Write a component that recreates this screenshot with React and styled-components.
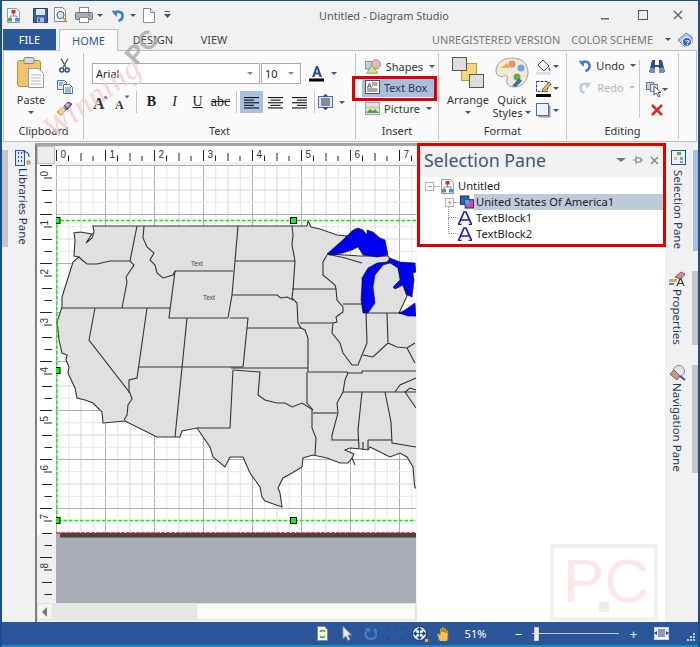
import React from "react";
import styled, { createGlobalStyle } from "styled-components";

const Global = createGlobalStyle`
  html, body { margin: 0; padding: 0; background: #f1f1f1; }
  * { box-sizing: border-box; }
`;
const UI = `"Noto Sans", "Open Sans", sans-serif`;
const BLUE = "#2b579a";

const Win = styled.div`
  position: relative; width: 700px; height: 647px; overflow: hidden;
  border: solid #1f4e8c; border-width: 1px 2px 0 2px; background: #f1f1f1;
  display: flex; flex-direction: column; font-family: ${UI}; font-size: 11px; color: #222;
`;
const TitleBar = styled.div`height: 28px; display: flex; align-items: center; padding-left: 4px; flex: none;`;
const Qat = styled.div`display: flex; align-items: center; width: 313px;`;
const QatSlot = styled.div`width: ${p => p.$w}px; margin-left: ${p => p.$ml || 0}px; display: flex; justify-content: center; align-items: center; flex: none;`;
const Title = styled.div`width: 130px; text-align: center; font-size: 10.9px; color: #555; white-space: nowrap;`;
const WinBtns = styled.div`margin-left: auto; display: flex; padding-right: 1px;`;
const WinBtn = styled.div`width: ${p => p.$w}px; height: 20px; display: flex; align-items: center; justify-content: center;`;

const TabRow = styled.div`height: 21px; display: flex; align-items: stretch; flex: none; padding-left: 1px; position: relative; z-index: 1;`;
const FileTab = styled.div`width: 53px; background: ${BLUE}; color: #fff; display: flex; align-items: center; justify-content: center; font-size: 11px; margin-right: 3px;`;
const Tab = styled.div`
  width: ${p => p.$w}px; display: flex; align-items: center; justify-content: center; font-size: 11px;
  color: ${p => (p.$active ? BLUE : "#444")};
  ${p => p.$active && `background:#fafafa; border:1px solid #bdbdbd; border-bottom:none; height:22px;`}
`;
const TabRight = styled.div`margin-left: auto; display: flex; align-items: center; color: #777; font-size: 10.9px; padding-right: 5px; white-space: nowrap;`;
const TabRightText = styled.span`margin-right: ${p => p.$mr}px;`;

const Ribbon = styled.div`
  height: 92px; flex: none; margin: 0 1px; background: #fafafa; border: 1px solid #bdbdbd; display: flex; padding: 2px 0;
`;
const Group = styled.div`width: ${p => p.$w}px; flex: none; border-right: 1px solid #c4c4c4; display: flex; flex-direction: column;`;
const GroupBody = styled.div`flex: 1; display: flex; min-height: 0; padding-left: ${p => p.$pl || 0}px;`;
const GroupLabel = styled.div`height: 20px; text-align: center; font-size: 11px; color: #333; line-height: 24px;`;

const BigBtn = styled.div`
  width: ${p => p.$w}px; display: flex; flex-direction: column; align-items: center; padding-top: ${p => p.$pt || 3}px;
  font-size: 11px; line-height: 13px; color: #333; flex: none;
`;
const BigIcon = styled.div`height: 34px; margin-bottom: ${p => p.$mb ?? 3}px; display: flex; align-items: center;`;
const BtnLine = styled.div`height: 13px; display: flex; align-items: center; gap: 3px; white-space: nowrap;`;
const Caret = styled.span`
  display: inline-block; width: 0; height: 0; border: solid transparent;
  border-width: ${p => (p.$big ? "4px 5px 0 5px" : "3px 3px 0 3px")};
  border-top-color: ${p => p.$c || "#44546a"}; margin-left: ${p => p.$ml || 0}px; vertical-align: middle; flex: none;
`;
const ToolCol = styled.div`display: flex; flex-direction: column; align-items: center; width: ${p => p.$w}px; gap: ${p => p.$gap || 0}px; padding-top: ${p => p.$pt || 0}px; flex: none;`;

const TextRows = styled.div`display: flex; flex-direction: column; padding-top: 10px;`;
const Row = styled.div`display: flex; align-items: center; height: ${p => p.$h || 22}px; margin-bottom: ${p => p.$mb || 0}px;`;
const Combo = styled.div`
  width: ${p => p.$w}px; height: 21px; border: 1px solid #ababab; background: #fff; margin-right: 1px;
  display: flex; align-items: center; justify-content: space-between; padding: 0 6px 0 3px; font-size: 11px; color: #222; flex: none;
`;
const Tool = styled.div`
  width: ${p => p.$w || 23}px; height: 22px; display: flex; align-items: center; justify-content: center; flex: none;
  background: ${p => (p.$on ? "#a9bfe0" : "transparent")}; margin-right: ${p => p.$mr || 0}px; margin-left: ${p => p.$ml || 0}px;
  font-family: "Liberation Serif", serif; font-size: 14px; color: #222;
`;
const Sep = styled.div`width: 1px; height: 22px; background: #c4c4c4; margin: 0 ${p => p.$r ?? p.$m ?? 1}px 0 ${p => p.$m ?? 1}px; flex: none;`;

const InsertCol = styled.div`display: flex; flex-direction: column; padding: 3px 0 0 6px; width: 100%;`;
const InsertBtn = styled.div`
  width: 73px; height: 21px; display: flex; align-items: center; padding-left: 3px; gap: 4px; font-size: 11px; color: #333; white-space: nowrap;
  background: ${p => (p.$on ? "#a9bfe0" : "transparent")}; margin-bottom: 1px;
`;
const UndoRow = styled.div`display: flex; align-items: center; gap: 5px; height: 22px; color: ${p => (p.$off ? "#b5b5b5" : "#333")}; font-size: 11px;`;
const VSep = styled.div`width: 1px; height: 58px; margin: 7px 0 0 0; background: #c8c8c8;`;
const RedBox = styled.div`position: absolute; border: 3px solid #e00000; pointer-events: none; z-index: 3;
  left: ${p => p.$l}px; top: ${p => p.$t}px; width: ${p => p.$w}px; height: ${p => p.$h}px;`;

const Main = styled.div`height: 479px; flex: none; margin-top: 1px; display: flex;`;
const Rail = styled.div`width: 33px; flex: none; display: flex; flex-direction: column; padding-top: 7px; position: relative;`;
const RailTab = styled.div`
  height: ${p => p.$h}px; margin-bottom: ${p => p.$mb || 0}px; display: flex; flex-direction: ${p => (p.$right ? "row" : "row-reverse")};
  justify-content: flex-end; gap: 5px;
`;
const RailMark = styled.div`width: ${p => p.$w || 6}px; background: ${p => p.$c || "#c6c6c6"}; flex: none;`;
const RailBody = styled.div`display: flex; flex-direction: column; align-items: center; width: 20px; flex: none;`;
const RailText = styled.div`writing-mode: vertical-rl; font-size: 11.5px; color: #2a3a55; white-space: nowrap; line-height: 16px; margin-top: ${p => p.$mt || 2}px;`;

const CanvasFrame = styled.div`width: 382px; flex: none; border-top: 3px solid #a6a6a6; border-left: 2px solid #7f7f7f; display: flex; flex-direction: column; background: #f1f1f1;`;
const RulerRow = styled.div`height: 19px; display: flex; flex: none;`;
const Corner = styled.div`width: 18px; height: 18px; background: #ececec; border: 1px solid #c2c2c2; margin-right: 1px; flex: none;`;
const MidRow = styled.div`height: 438px; display: flex; flex: none;`;
const ScrollRow = styled.div`height: 17px; flex: none; display: flex; background: #e6e6e6; padding-right: 1px;`;
const ScrollBtn = styled.div`width: 16px; background: #f4f4f4; border: 1px solid #e0e0e0; display: flex; align-items: center; justify-content: center; flex: none;`;
const ScrollThumb = styled.div`margin-left: auto; width: 220px; background: #fbfbfb; border: 1px solid #e2e2e2;`;

const Pane = styled.div`width: 248px; flex: none; background: #fff; display: flex; flex-direction: column;`;
const PaneHead = styled.div`height: 34px; flex: none; background: #f1f1f1; display: flex; align-items: center; padding: 0 6px 0 7px;`;
const PaneTitle = styled.h2`margin: 0; font-weight: 400; font-size: 17.8px; color: #3f5679; white-space: nowrap; flex: 1;`;
const PaneBtns = styled.div`display: flex; align-items: center; gap: 7px;`;
const Tree = styled.div`display: flex; flex-direction: column; padding-top: 1px;`;
const TreeRow = styled.div`height: 16px; display: flex; align-items: center; padding-left: ${p => p.$pl}px; color: #222; font-size: 11.2px; white-space: nowrap;`;
const Expander = styled.span`
  width: 9px; height: 9px; border: 1px solid #b0b0b0; flex: none; position: relative; background: #fafafa;
  display: flex; align-items: center; justify-content: center; color: #777; font-size: 9px; line-height: 7px;
`;
const Dots = styled.span`width: ${p => p.$w}px; border-top: 1px dotted #999; flex: none;`;
const Elbow = styled.span`width: 10px; height: 16px; margin-top: -16px; border-left: 1px dotted #999; border-bottom: 1px dotted #999; flex: none;`;
const Label = styled.span`
  display: block; padding-left: 2px; height: 16px; line-height: 16px; margin-left: ${p => p.$ml ?? 1}px;
  background: ${p => (p.$sel ? "#bccad9" : "transparent")}; flex: ${p => (p.$sel ? 1 : "none")};
`;

const Status = styled.div`height: 25px; flex: none; margin: 0 -2px; width: 700px; background: ${BLUE}; border-bottom: 2px solid #1a8ac0; display: flex; align-items: center; color: #fff; padding-left: 310px;`;
const StatusIcon = styled.div`width: 24.4px; display: flex; justify-content: center; flex: none;`;
const Zoom = styled.div`width: 30px; text-align: right; font-size: 11px; margin-right: 26px; flex: none;`;
const Glyph = styled.div`width: 12px; text-align: center; font-size: 13px; flex: none;`;
const Slider = styled.div`width: 87px; height: 1px; background: #c9c9c9; margin: 0 8px 0 8px; flex: none; display: flex; align-items: center; padding-left: 2px;`;
const Thumb = styled.div`width: 5px; height: 14px; background: #eee; border: 1px solid #ccc; flex: none;`;
const FitSlot = styled.div`margin-left: 15px; display: flex; flex: none;`;
const GripSlot = styled.div`margin-left: 18px; margin-top: 6px; display: flex; flex: none;`;

const WatermarkA = styled.div`
  position: absolute; left: 45px; top: 112px; font: italic 32px "Liberation Serif", serif; color: #f9c9cb; letter-spacing: 1px;
  transform: rotate(-37deg); transform-origin: left center; pointer-events: none; z-index: 2; opacity: .8;
`;
const WatermarkB = styled.div`
  position: absolute; left: 128px; top: 44px; font: bold 26px "Liberation Sans", sans-serif; color: #a8a8a8;
  transform: rotate(-48deg); transform-origin: left center; pointer-events: none; z-index: 2; opacity: .8;
`;
const Stamp = styled.div`
  position: absolute; left: 548px; top: 543px; width: 108px; height: 77px; border: 4px solid #f2efef; pointer-events: none; overflow: hidden;
  display: flex; padding: 0 0 0 9px; font: 300 62px/66px "Liberation Sans", sans-serif; color: #fde6e8; align-items: flex-start;
`;
const StampDot = styled.span`width: 10px; height: 10px; background: #ececec; align-self: flex-end; margin: 0 -5px 5px -5px; flex: none;`;

/* ---------- icons ---------- */
const S = ({ w = 16, h = 16, vb, children }) => <svg width={w} height={h} viewBox={vb || `0 0 ${w} ${h}`}>{children}</svg>;
const AppIco = ({ s = 15 }) => (
  <S w={s} h={s} vb="0 0 15 15">
    <path d="M1.5.5h9l3 3v11h-12z" fill="#fff" stroke="#8a9ab5" />
    <path d="M7.5 5v3M4 10V8h7v2" stroke="#888" fill="none" />
    <rect x="5.5" y="2" width="4" height="3.5" fill="#d02a2a" />
    <rect x="2" y="10" width="4" height="3.5" fill="#5ca04a" />
    <rect x="9" y="10" width="4" height="3.5" fill="#4a8fd0" />
  </S>
);
const SaveIco = () => (
  <S w={15} h={15}>
    <path d="M.5.5h14v14H.5z" fill="#3a5fa8" stroke="#223f78" />
    <rect x="3" y="1" width="9" height="6" fill="#dfe6f2" />
    <rect x="4" y="9.5" width="7" height="5" fill="#aab8d0" />
    <rect x="5" y="10.5" width="2" height="3" fill="#3a5fa8" />
  </S>
);
const PreviewIco = () => (
  <S w={16} h={16}>
    <path d="M1.5.5h8l3 3v11h-11z" fill="#fff" stroke="#7a8aa0" />
    <circle cx="7.5" cy="8" r="3.6" fill="#cfe4f5" stroke="#555" />
    <path d="M10 11l4 4" stroke="#d89a3a" strokeWidth="2" />
  </S>
);
const PrintIco = () => (
  <S w={18} h={16}>
    <rect x="4.5" y=".5" width="9" height="5" fill="#fff" stroke="#888" />
    <rect x=".5" y="5.5" width="17" height="7" rx="1" fill="#a8afb8" stroke="#6a7078" />
    <rect x="4.5" y="10.5" width="9" height="5" fill="#fff" stroke="#888" />
    <rect x="13" y="7" width="2" height="1.5" fill="#4a90d0" />
  </S>
);
const UndoIco = ({ c = "#3f7ec9", s = 13, flip }) => (
  <S w={s} h={s} vb="0 0 13 13">
    <g transform={flip ? "translate(13 0) scale(-1 1)" : undefined}>
      <path d="M3 5c2-3.500 8-3 8.500 1 .3 2.500-1.500 5-4 6" fill="none" stroke={c} strokeWidth="2.600" />
      <path d="M.5 1.500l6 .8-1 5.700z" fill={c} />
    </g>
  </S>
);
const DocIco = () => (
  <S w={12} h={15}>
    <path d="M.5.5h7l4 4v10H.5z" fill="#fff" stroke="#7d8da8" />
    <path d="M7.500.5v4h4" fill="#dce4f0" stroke="#7d8da8" />
  </S>
);
const CustomIco = () => (
  <S w={7} h={8}>
    <rect x="1" y="0" width="5" height="1" fill="#44546a" />
    <path d="M0 3h7L3.500 7z" fill="#44546a" />
  </S>
);
const PasteIco = () => (
  <S w={28} h={32}>
    <rect x=".5" y="3.5" width="23" height="26" rx="2" fill="#f2c36e" stroke="#b58c42" />
    <rect x="7" y=".5" width="10" height="6" rx="1" fill="#d7d7d7" stroke="#888" />
    <path d="M11.500 11.500h10l5 5v14h-15z" fill="#fff" stroke="#8a9ab5" />
    <path d="M14 18h10M14 21h10M14 24h10M14 27h10" stroke="#a8b4c8" />
  </S>
);
const ScissorIco = () => (
  <S w={11} h={15}>
    <path d="M2 .5l5 9M9 .5l-5 9" stroke="#555" strokeWidth="1.300" />
    <circle cx="2.800" cy="12" r="2" fill="none" stroke="#2a4d9c" strokeWidth="1.500" />
    <circle cx="8.200" cy="12" r="2" fill="none" stroke="#2a4d9c" strokeWidth="1.500" />
  </S>
);
const CopyIco = () => (
  <S w={16} h={14}>
    <path d="M.5.5h7l2 2v7H.5z" fill="#eaf0f8" stroke="#4470b0" />
    <path d="M6.500 4.500h6l3 3v6h-9z" fill="#fff" stroke="#4470b0" />
    <path d="M8 8h6M8 10h6M8 12h6M2 3h4M2 5h3" stroke="#4470b0" />
  </S>
);
const BrushIco = () => (
  <S w={17} h={15}>
    <path d="M1 11l6-5 3 3-5 5.500z" fill="#f4d77a" stroke="#a98a3a" />
    <path d="M8 5l4-4 4 2-5 6z" fill="#7d6bb0" stroke="#4f4080" />
  </S>
);
const ColorA = () => (
  <S w={16} h={17}>
    <path d="M3 12L7 1h2l4 11h-2.500l-.8-2.500H6.300L5.500 12zM6.900 7.500h2.200L8 4z" fill="#2b4c94" />
    <rect x="0" y="13.500" width="15" height="3" fill="#000" />
  </S>
);
const GrowA = ({ big }) => (
  <S w={16} h={15}>
    <text x="1" y="13.500" fontFamily="Liberation Serif, serif" fontWeight="700" fontSize={big ? 16 : 12} fill="#333">A</text>
    <path d={big ? "M11 3.500l2.500-3 2.500 3z" : "M10.500.5h5L13 3.500z"} fill="#4a6fb0" />
  </S>
);
const AlignIco = ({ type }) => {
  const rows = [15, 10, 15, 10, 15];
  const x = w => (type === "l" ? 0 : type === "c" ? (15 - w) / 2 : 15 - w);
  return (
    <S w={15} h={13}>
      {rows.map((w, i) => <rect key={i} x={x(w)} y={i * 2.600 + 1} width={w} height="1.100" fill="#111" />)}
    </S>
  );
};
const SpacingIco = () => (
  <S w={15} h={16}>
    <rect x=".5" y="2.500" width="14" height="11" fill="#dce6f5" stroke="#4b6fa8" />
    <path d="M3 5h9M3 7h9M3 9h9M3 11h9" stroke="#333" />
    <path d="M7.500 0l3 2.500h-6zM7.500 16l3-2.500h-6z" fill="#1c2fd0" />
  </S>
);
const ShapesIco = () => (
  <S w={20} h={17}>
    <rect x=".5" y="2.500" width="11" height="9" fill="#b9d0ee" stroke="#6a8ab8" />
    <circle cx="13" cy="6" r="5.500" fill="#e9b6b0" stroke="#a87f7a" />
    <path d="M8.500 7l6.500 9.500H2z" fill="#d9e58c" stroke="#7a9a40" />
  </S>
);
const TextBoxIco = () => (
  <S w={15} h={14}>
    <rect x=".5" y=".5" width="14" height="13" fill="#fff" stroke="#44546a" />
    <text x="2" y="7.500" fontSize="7" fontFamily="Liberation Sans, sans-serif" fill="#222">A</text>
    <path d="M7 3h5.500M7 5h5.500M2 9h10.500M2 11h10.500" stroke="#555" />
  </S>
);
const PictureIco = () => (
  <S w={15} h={13}>
    <rect x=".5" y=".5" width="14" height="12" fill="#dbe5f1" stroke="#98a4b5" />
    <path d="M1 11l4-4 3 2 2-2 4 4z" fill="#5aa23c" />
    <path d="M1 4h13v3H1z" fill="#e8c88a" opacity=".7" />
  </S>
);
const ArrangeIco = () => (
  <S w={32} h={32}>
    <rect x="9.500" y="6.500" width="15" height="17" fill="#f4d77a" stroke="#b89a3a" />
    <rect x=".5" y=".5" width="14" height="13" fill="#ddd" stroke="#555" />
    <rect x="17.500" y="17.500" width="14" height="13" fill="#ddd" stroke="#555" />
  </S>
);
const StylesIco = () => (
  <S w={34} h={32}>
    <path d="M17 1C7 1 1 7 1 14c0 6 6 6 8 5 3-1 4 1 3 4-1 4 2 7 7 7 9 0 14-7 14-15C33 6 26 1 17 1z" fill="#f2ead8" stroke="#a5a094" />
    <circle cx="17" cy="7" r="3.500" fill="#e58f8a" />
    <path d="M6 11l6-5 3 5z" fill="#e9b43c" />
    <circle cx="26" cy="11" r="3.500" fill="#6fa6de" />
    <circle cx="22" cy="20" r="3.500" fill="#6aa84f" />
    <path d="M17 29l7-8 3 3-6 6z" fill="#3f6fb0" />
  </S>
);
const FillIco = () => (
  <S w={15} h={16}>
    <path d="M7 1l6 6-5 5-6-6z" fill="#fff" stroke="#2a4d9c" />
    <path d="M13 8c1 2 2 3 1 4-1 0-2-2-1-4z" fill="#2a4d9c" />
    <rect y="13" width="15" height="2.500" fill="#dedede" />
  </S>
);
const PenIco = () => (
  <S w={15} h={17}>
    <rect x=".5" y="1.500" width="11" height="10" fill="#fff" stroke="#1e3ca0" strokeDasharray="3 1" />
    <path d="M6 10l7-8 2 2-7 8z" fill="#e9c46a" stroke="#7a5a1a" />
    <rect y="14" width="15" height="3" fill="#000" />
  </S>
);
const ShadowIco = () => (
  <S w={15} h={15}>
    <rect x="2.500" y="2.500" width="12" height="12" fill="#9a9a9a" />
    <rect x=".5" y=".5" width="12" height="12" fill="#eef4fb" stroke="#4b6fa8" />
  </S>
);
const BinocIco = () => (
  <S w={16} h={15}>
    <path d="M3 1h3v5h4V1h3l3 12h-6V8H6v5H0z" fill="#2f4f86" />
    <rect x="1" y="9" width="5" height="5" fill="#6f8fc0" />
    <rect x="10" y="9" width="5" height="5" fill="#6f8fc0" />
  </S>
);
const SelectIco = () => (
  <S w={15} h={16}>
    <rect x=".5" y="1.500" width="7" height="7" fill="#c5d0de" stroke="#6e7a8a" />
    <rect x="4.500" y="3.500" width="7" height="7" fill="#e5e9ef" stroke="#6e7a8a" />
    <path d="M8 5l0 9 2.500-2 2 4 1.500-.8-2-3.700h3z" fill="#fff" stroke="#555" />
  </S>
);
const XIco = () => (
  <S w={12} h={12}>
    <path d="M1 1l10 10M11 1L1 11" stroke="#e02a20" strokeWidth="2.600" />
  </S>
);
const HelpIco = () => (
  <S w={16} h={16}>
    <path d="M1 8l8-7 6 4v6l-7 4z" fill="#b8c8e0" stroke="#6a82a8" />
    <circle cx="10" cy="10" r="4.500" fill="#2f62b4" stroke="#fff" />
    <text x="8" y="13" fontSize="8" fontWeight="700" fontFamily="Liberation Sans, sans-serif" fill="#fff">?</text>
  </S>
);
const LibIco = () => (
  <S w={16} h={16}>
    <rect x=".5" y=".5" width="9" height="15" fill="#dce6f5" stroke="#2f4f86" />
    <path d="M3 3h1M6 3h1M3 7h1M6 7h1M3 11h1M6 11h1" stroke="#2f4f86" strokeWidth="2" />
    <path d="M8 2c4-1 6 1 6 5" fill="none" stroke="#2f4f86" strokeWidth="1.200" />
    <rect x="12" y="11" width="3" height="3" fill="#f2c94c" stroke="#555" strokeWidth=".5" />
  </S>
);
const SelTabIco = () => (
  <S w={15} h={15}>
    <rect x=".5" y=".5" width="14" height="14" fill="#e8f0f8" stroke="#2f4f86" />
    <rect x="6" y="2" width="4" height="3" fill="#6aa84f" />
    <rect x="3" y="7" width="3" height="3" fill="#e2c14a" />
    <rect x="9" y="7" width="3" height="3" fill="#6fa6de" />
    <rect x="9" y="11" width="3" height="2" fill="#999" />
  </S>
);
const PropIco = () => (
  <S w={18} h={16}>
    <path d="M7 6l6-5 4 2-4 5z" fill="#d98d8d" stroke="#7a5a5a" />
    <path d="M1 8h8v3H1z" fill="#c9b06a" />
    <rect x="1" y="12" width="5" height="2" fill="#777" />
    <path d="M9 15l3-7h1l3 7M10.500 12.500h4" fill="none" stroke="#333" strokeWidth="1.200" />
  </S>
);
const NavIco = () => (
  <S w={17} h={16}>
    <circle cx="10" cy="6" r="5.500" fill="#dfe8f0" stroke="#8a8a8a" />
    <path d="M1 9l4-4 6 6-3 4z" fill="#d7938a" stroke="#8a5a52" />
    <path d="M11 11l5 4" stroke="#2f4f86" strokeWidth="2" />
  </S>
);
const BoxesIco = () => (
  <S w={14} h={14} vb="0 0 15 14">
    <rect x=".5" y=".5" width="9" height="9" fill="#2f5fc0" stroke="#1a2f70" />
    <rect x="5.500" y="4.500" width="9" height="9" fill="#e040c0" stroke="#1a2f70" />
    <rect x="5.500" y="4.500" width="4" height="5" fill="#20c8d8" />
  </S>
);
const AIco = () => (
  <S w={14} h={14}>
    <path d="M.5 13.500L6 1h2l5.500 12.500M3 9h8" fill="none" stroke="#1418e0" strokeWidth="1.700" />
    <path d="M0 13.500h3.500M10.500 13.500H14" stroke="#1418e0" strokeWidth="1.300" />
  </S>
);
const RefreshDoc = () => (
  <S w={11} h={15}>
    <path d="M.5.5h7l3 3v11H.5z" fill="#f6f6ea" stroke="#888" />
    <path d="M3 6c1-2 4-2 5 0M8 10c-1 2-4 2-5 0" stroke="#3a9a3a" fill="none" strokeWidth="1.300" />
  </S>
);
const Pointer = () => (
  <S w={10} h={15}>
    <path d="M1 .5v12l3-2.500 2 4.500 2-1-2-4.500h3.500z" fill="#e8ecf2" stroke="#8a94a3" />
  </S>
);
const Rotate = () => (
  <S w={13} h={13}>
    <path d="M4 2c-4 3-3 10 3 10s7-7 3-10" fill="none" stroke="#3f7ec9" strokeWidth="2.200" />
    <path d="M1 1h5v5z" fill="#3f7ec9" />
  </S>
);
const Dashed = () => (
  <S w={17} h={14}>
    <path d="M2 3L15 2M2 11h13M2 3v8M15 2v9" stroke="#2a5ea8" strokeDasharray="1.500 2" fill="none" />
    {[[1, 2], [8, 1], [15, 1], [1, 11], [15, 11]].map(([x, y]) => <rect key={x + "-" + y} x={x - 1} y={y - 1} width="2.500" height="2.500" fill="#1c4f9c" />)}
  </S>
);
const MoveIco = () => (
  <S w={16} h={16}>
    <circle cx="7.500" cy="7.500" r="7" fill="#e8eef8" stroke="#1a2f60" />
    <path d="M7.500 2v11M2 7.500h11M7.500 1.500l-2 2.500h4zM7.500 13.500l-2-2.500h4zM1.500 7.500l2.500-2v4zM13.500 7.500l-2.500-2v4z" stroke="#1a3f80" fill="#1a3f80" strokeWidth=".8" />
    <rect x="13" y="13" width="3" height="3" fill="#e8b040" />
  </S>
);
const Hand = () => (
  <S w={14} h={15}>
    <path d="M3 9V3c0-1 2-1 2 0v3-4c0-1 2-1 2 0v4-3c0-1 2-1 2 0v4-2c0-1 2-1 2 0v6c0 4-2 6-5 6-2 0-3-1-4-3L.5 9c-.5-1 1-2 2-1z" fill="#f0c45a" stroke="#8a6a20" strokeWidth=".8" />
  </S>
);
const FitIco = () => (
  <S w={15} h={13}>
    <rect x=".5" y=".5" width="14" height="12" fill="#f4f6fa" stroke="#d0d4dc" />
    <path d="M4 3h7M4 5h7M4 7h7M4 9h7" stroke="#1a3f80" />
    <path d="M0 6l3-2v4zM15 6l-3-2v4z" fill="#1a3f80" />
  </S>
);
const Grip = () => (
  <S w={8} h={8}>
    {[[6, 0], [3, 3], [6, 3], [0, 6], [3, 6], [6, 6]].map(([x, y]) => <rect key={x + "_" + y} x={x} y={y} width="2" height="2" fill="#c8d2e4" />)}
  </S>
);

/* ---------- rulers and map (all coordinates are window pixels) ---------- */
const MAJ = 49;
const TopRuler = () => {
  const t = [];
  for (let i = 0; i < 8; i++) {
    const x = 56.5 + i * MAJ;
    t.push(<path key={i} d={`M${x} 150V161M${x + 12} 155.500V161M${x + 24.500} 153V161M${x + 36.500} 156V161`} stroke="#222" strokeWidth="1" fill="none" />);
    t.push(<text key={"t" + i} x={x + 4} y="158" fontSize="10" fontFamily="Liberation Sans, sans-serif" fill="#333">{i}</text>);
  }
  return (
    <svg width="361" height="19" viewBox="56 146 361 19">
      <rect x="56" y="146" width="361" height="16" fill="#fff" />
      {t}
    </svg>
  );
};
const LeftRuler = () => {
  const t = [];
  for (let i = 0; i < 9; i++) {
    const y = 165.500 + i * MAJ;
    t.push(<path key={i} d={`M40 ${y}H52M44 ${y + 12.500}H52M42 ${y + 25}H52M44.500 ${y + 37}H52`} stroke="#222" fill="none" />);
    t.push(<text key={"t" + i} transform={`translate(48 ${y + 11}) rotate(-90)`} fontSize="10" fontFamily="Liberation Sans, sans-serif" fill="#333">{i}</text>);
  }
  return (
    <svg width="19" height="438" viewBox="37 165 19 438">
      <rect x="37" y="165" width="19" height="370" fill="#fff" />
      <rect x="37" y="535" width="19" height="68" fill="#f0f0f0" />
      <g>{t}</g>
    </svg>
  );
};

const LAND = "93,226 307,226 308,221 311,227 320,229 337,235 347,236 340,245 330,254 360,256 388,256 392,262 398,266 403,285 407,296 399,313 417,316 417,488 415,488 414,480 413,467 407,457 400,453 390,457 370,447 368,450 362,449 350,448 345,450 354,454 352,458 355,465 352,458 348,463 340,463 327,458 313,455 303,458 302,467 292,473 283,478 278,488 280,493 282,507 265,501 262,497 260,487 250,473 243,457 230,457 225,467 213,457 210,447 197,428 182,431 180,437 157,437 125,421 103,423 102,412 93,403 85,400 77,398 75,388 68,373 69,367 66,360 67,355 62,353 59,340 58,330 57,322 62,307 62,297 73,262 79,257 74,256 75,240 74,233 80,232 92,234 86,243 92,238 94,232";
const BORDERS = [
  "137,226 130,261",
  "144,226 143,238 147,247 154,253 150,260 155,265 157,273 163,278 173,275 175,271",
  "79,257 82,260 87,264 97,264 110,261 130,261 134,265 126,277 127,282 122,308",
  "62,308 170,308",
  "175,271 233,271",
  "175,271 169,318 228,318",
  "95,308 89,340 130,393 132,399 128,405 127,415 124,420",
  "147,308 137,378 129,380 129,393",
  "138,367 243,367",
  "187,318 175,437",
  "230,318 248,318 243,367",
  "238,226 235,261 232,295 228,318",
  "235,261 295,261",
  "232,295 277,295 281,298 287,297 293,300",
  "292,226 293,235 292,245 295,261 293,290 292,298 297,303 298,323 301,328 305,330 308,338 308,372",
  "247,328 301,328",
  "231,368 308,368",
  "292,289 336,289 337,300 343,307 343,312 336,317 337,322 333,323 300,323",
  "327,255 323,262 323,275 335,285 336,289",
  "327,254 345,258 362,263",
  "343,304 362,304",
  "333,323 332,333 340,343 343,353 352,365 358,365 362,355 367,343 366,313 400,313",
  "387,313 388,342",
  "363,355 373,357 388,343 397,347 407,348 415,343",
  "308,372 347,372 348,373 345,380 343,392 337,403 338,413 332,435 332,440 358,440",
  "362,371 416,371",
  "348,373 362,373 362,371",
  "343,392 416,392",
  "307,372 307,403 313,410",
  "313,413 337,413",
  "312,410 312,428 316,438 315,455",
  "362,392 358,430 359,448",
  "363,442 363,450",
  "368,440 368,450",
  "368,440 392,440",
  "385,392 391,422 392,443 416,447",
  "233,370 230,428 197,428",
  "233,370 260,372 258,395 265,400 277,403 285,403 292,407 302,403 313,410",
  "395,392 400,385 416,378",
  "405,392 410,388 416,390",
  "405,392 416,408",
  "407,348 415,363",
];
const SUPERIOR = "327,254 345,238 353,230 358,228 363,230 367,235 367,230 373,232 380,238 385,240 388,255 377,257 363,255 358,247 352,250 343,253 330,255";
const MICH = "362,278 368,268 377,263 387,262 390,258 400,262 415,263 416,272 413,273 414,280 412,297 407,295 403,285 395,289 393,287 400,280 398,268 390,263 383,265 375,275 373,287 375,303 368,313 363,313 361,300 362,283";
const ERIE = "399,313 405,310 415,303 416,316 408,316";
const Handle = ({ x, y }) => <rect x={x - 3} y={y - 3} width="6" height="6" fill="#0f0" stroke="#000" />;

const MapDrawing = () => {
  const shade = i => (i % 4 === 0 ? "#b0b0b0" : i % 2 === 0 ? "#d4d4d4" : "#e6e6e6");
  const grid = [];
  for (let i = 0; i < 31; i++) {
    const x = 56.500 + i * 12.250;
    grid.push(<path key={"v" + i} d={`M${x} 165V533`} stroke={shade(i)} />);
  }
  for (let i = 0; i < 31; i++) {
    const y = 165.500 + i * 12.250;
    if (y < 533) grid.push(<path key={"h" + i} d={`M56 ${y}H416`} stroke={shade(i)} />);
  }
  return (
    <svg width="361" height="438" viewBox="56 165 361 438">
      <rect x="56" y="165" width="360" height="368" fill="#fff" />
      {grid}
      <rect x="56" y="533" width="360" height="70" fill="#a9acb5" />
      <rect x="60" y="533" width="356" height="4.500" fill="#444" />
      <path d="M56 532.800H416" stroke="#f01010" strokeWidth="1.200" strokeDasharray="4 1" />
      <polygon points={LAND} fill="#e0e0e0" stroke="#333" strokeWidth="1.100" />
      {BORDERS.map((b, i) => <polyline key={i} points={b} fill="none" stroke="#333" strokeWidth="1.100" />)}
      <polygon points={SUPERIOR} fill="#0000f0" stroke="#111" strokeWidth=".6" />
      <polygon points={MICH} fill="#0000f0" stroke="#111" strokeWidth=".6" />
      <polygon points={ERIE} fill="#0000f0" stroke="#111" strokeWidth=".6" />
      <text x="191" y="266" fontSize="6.500" fontFamily="Liberation Sans, sans-serif" fill="#445">Text</text>
      <text x="203" y="300" fontSize="6.500" fontFamily="Liberation Sans, sans-serif" fill="#445">Text</text>
      <path d="M416 220.500H57V520.500H416" fill="none" stroke="#00f000" strokeWidth="1.300" strokeDasharray="3.500 2" />
      <Handle x={57} y={220.500} />
      <Handle x={293.500} y={220.500} />
      <Handle x={57} y={370.500} />
      <Handle x={57} y={520.500} />
      <Handle x={293.500} y={520.500} />
      <rect x="416" y="165" width="1" height="438" fill="#f4f4f4" />
    </svg>
  );
};

export default function App() {
  return (
    <Win>
      <Global />
      <TitleBar>
        <Qat>
          <QatSlot $w={15}><AppIco /></QatSlot>
          <QatSlot $w={25} $ml={7}><SaveIco /></QatSlot>
          <QatSlot $w={16}><PreviewIco /></QatSlot>
          <QatSlot $w={24} $ml={3}><PrintIco /></QatSlot>
          <QatSlot $w={8}><Caret /></QatSlot>
          <QatSlot $w={26}><UndoIco /></QatSlot>
          <QatSlot $w={6}><Caret /></QatSlot>
          <QatSlot $w={26}><DocIco /></QatSlot>
          <QatSlot $w={10}><CustomIco /></QatSlot>
        </Qat>
        <Title>Untitled - Diagram Studio</Title>
        <WinBtns>
          <WinBtn $w={44}><S w={9} h={9}><rect y="7" width="8" height="1.500" fill="#666" /></S></WinBtn>
          <WinBtn $w={32}><S w={10} h={10}><rect x=".5" y=".5" width="9" height="9" fill="none" stroke="#555" /></S></WinBtn>
          <WinBtn $w={38}><S w={10} h={10}><path d="M1 1l8 8M9 1L1 9" stroke="#555" strokeWidth="1.100" /></S></WinBtn>
        </WinBtns>
      </TitleBar>
      <TabRow>
        <FileTab>FILE</FileTab>
        <Tab $active $w={59}>HOME</Tab>
        <Tab $w={70}>DESIGN</Tab>
        <Tab $w={52}>VIEW</Tab>
        <TabRight>
          <TabRightText $mr={11}>UNREGISTERED VERSION</TabRightText>
          <TabRightText $mr={12}>COLOR SCHEME</TabRightText>
          <Caret />
          <TabRightText $mr={6} />
          <HelpIco />
        </TabRight>
      </TabRow>
      <Ribbon>
        <Group $w={80}>
          <GroupBody $pl={3}>
            <BigBtn $w={48}>
              <BigIcon><PasteIco /></BigIcon>
              <BtnLine>Paste</BtnLine>
              <BtnLine><Caret /></BtnLine>
            </BigBtn>
            <ToolCol $w={19} $gap={7} $pt={5}>
              <ScissorIco />
              <CopyIco />
              <BrushIco />
            </ToolCol>
          </GroupBody>
          <GroupLabel>Clipboard</GroupLabel>
        </Group>
        <Group $w={272}>
          <GroupBody $pl={8}>
            <TextRows>
              <Row $h={21} $mb={7}>
                <Combo $w={168}>Arial<Caret $c="#888" /></Combo>
                <Combo $w={40}>10<Caret $c="#888" /></Combo>
                <Tool $w={24} $ml={3}><ColorA /></Tool>
                <Caret $ml={2} />
              </Row>
              <Row>
                <Tool $w={22} $ml={-3}><GrowA big /></Tool>
                <Tool $w={22}><GrowA /></Tool>
                <Sep $m={3} />
                <Tool><b>B</b></Tool>
                <Tool><i>I</i></Tool>
                <Tool><u>U</u></Tool>
                <Tool><s>abc</s></Tool>
                <Sep $m={4} $r={3} />
                <Tool $on><AlignIco type="l" /></Tool>
                <Tool $ml={1}><AlignIco type="c" /></Tool>
                <Tool $ml={1}><AlignIco type="r" /></Tool>
                <Sep $m={3} />
                <Tool $w={15}><SpacingIco /></Tool>
                <Caret $ml={6} />
              </Row>
            </TextRows>
          </GroupBody>
          <GroupLabel>Text</GroupLabel>
        </Group>
        <Group $w={83}>
          <GroupBody>
            <InsertCol>
              <InsertBtn><ShapesIco />Shapes <Caret $ml={2} /></InsertBtn>
              <InsertBtn $on><TextBoxIco />Text Box</InsertBtn>
              <InsertBtn><PictureIco />Picture <Caret $ml={2} /></InsertBtn>
            </InsertCol>
          </GroupBody>
          <GroupLabel>Insert</GroupLabel>
        </Group>
        <Group $w={128}>
          <GroupBody $pl={5}>
            <BigBtn $w={48}>
              <BigIcon><ArrangeIco /></BigIcon>
              <BtnLine>Arrange</BtnLine>
              <BtnLine><Caret /></BtnLine>
            </BigBtn>
            <BigBtn $w={40}>
              <BigIcon><StylesIco /></BigIcon>
              <BtnLine>Quick</BtnLine>
              <BtnLine>Styles<Caret /></BtnLine>
            </BigBtn>
            <ToolCol $w={30} $gap={5} $pt={5}>
              <Row $h={17}><FillIco /><Caret $ml={2} /></Row>
              <Row $h={17}><PenIco /><Caret $ml={2} /></Row>
              <Row $h={17}><ShadowIco /><Caret $ml={2} /></Row>
            </ToolCol>
          </GroupBody>
          <GroupLabel>Format</GroupLabel>
        </Group>
        <Group $w={112}>
          <GroupBody $pl={8}>
            <ToolCol $w={64} $pt={1}>
              <UndoRow><UndoIco />Undo <Caret /></UndoRow>
              <UndoRow $off><UndoIco c="#b9cde4" flip />Redo <Caret $c="#bbb" /></UndoRow>
            </ToolCol>
            <VSep />
            <ToolCol $w={34} $gap={7} $pt={6}>
              <BinocIco />
              <Row $h={16}><SelectIco /><Caret $ml={1} /></Row>
              <XIco />
            </ToolCol>
          </GroupBody>
          <GroupLabel>Editing</GroupLabel>
        </Group>
      </Ribbon>
      <Main>
        <Rail>
          <RailTab $h={97}>
            <RailBody><LibIco /><RailText>Libraries Pane</RailText></RailBody>
            <RailMark />
          </RailTab>
        </Rail>
        <CanvasFrame>
          <RulerRow><Corner /><TopRuler /></RulerRow>
          <MidRow><LeftRuler /><MapDrawing /></MidRow>
          <ScrollRow>
            <ScrollBtn><S w={6} h={10}><path d="M5 0v10L0 5z" fill="#777" /></S></ScrollBtn>
            <ScrollThumb />
          </ScrollRow>
        </CanvasFrame>
        <Pane>
          <PaneHead>
            <PaneTitle>Selection Pane</PaneTitle>
            <PaneBtns>
              <Caret $c="#777" $big />
              <S w={10} h={10}><path d="M3 1v8M3 3h5v4H3M8 5h2M0 5h3" stroke="#777" fill="none" /></S>
              <S w={9} h={9}><path d="M1 1l7 7M8 1L1 8" stroke="#777" strokeWidth="1.100" /></S>
            </PaneBtns>
          </PaneHead>
          <Tree>
            <TreeRow $pl={8}><Expander>−</Expander><Dots $w={6} /><AppIco /><Label>Untitled</Label></TreeRow>
            <TreeRow $pl={28}><Expander>+</Expander><Dots $w={6} /><BoxesIco /><Label $sel $ml={0}>United States Of America1</Label></TreeRow>
            <TreeRow $pl={31}><Elbow /><AIco /><Label $ml={2}>TextBlock1</Label></TreeRow>
            <TreeRow $pl={31}><Elbow /><AIco /><Label $ml={2}>TextBlock2</Label></TreeRow>
          </Tree>
        </Pane>
        <Rail>
          <RailTab $right $h={101} $mb={20}>
            <RailBody><SelTabIco /><RailText $mt={5}>Selection Pane</RailText></RailBody>
            <RailMark $c="#a9bfe0" $w={5} />
          </RailTab>
          <RailTab $right $h={74} $mb={20}>
            <RailBody><PropIco /><RailText>Properties</RailText></RailBody>
            <RailMark $w={6} />
          </RailTab>
          <RailTab $right $h={108}>
            <RailBody><NavIco /><RailText>Navigation Pane</RailText></RailBody>
            <RailMark $w={6} />
          </RailTab>
        </Rail>
      </Main>
      <Status>
        <StatusIcon><RefreshDoc /></StatusIcon>
        <StatusIcon><Pointer /></StatusIcon>
        <StatusIcon><Rotate /></StatusIcon>
        <StatusIcon><Dashed /></StatusIcon>
        <StatusIcon><MoveIco /></StatusIcon>
        <StatusIcon><Hand /></StatusIcon>
        <Zoom>51%</Zoom>
        <Glyph>−</Glyph>
        <Slider><Thumb /></Slider>
        <Glyph>+</Glyph>
        <FitSlot><FitIco /></FitSlot>
        <GripSlot><Grip /></GripSlot>
      </Status>
      <WatermarkA>Winning</WatermarkA>
      <WatermarkB>PC</WatermarkB>
      <Stamp>P<StampDot />C</Stamp>
      <RedBox $l={350} $t={75} $w={85} $h={25} />
      <RedBox $l={415} $t={142} $w={249} $h={104} />
    </Win>
  );
}
